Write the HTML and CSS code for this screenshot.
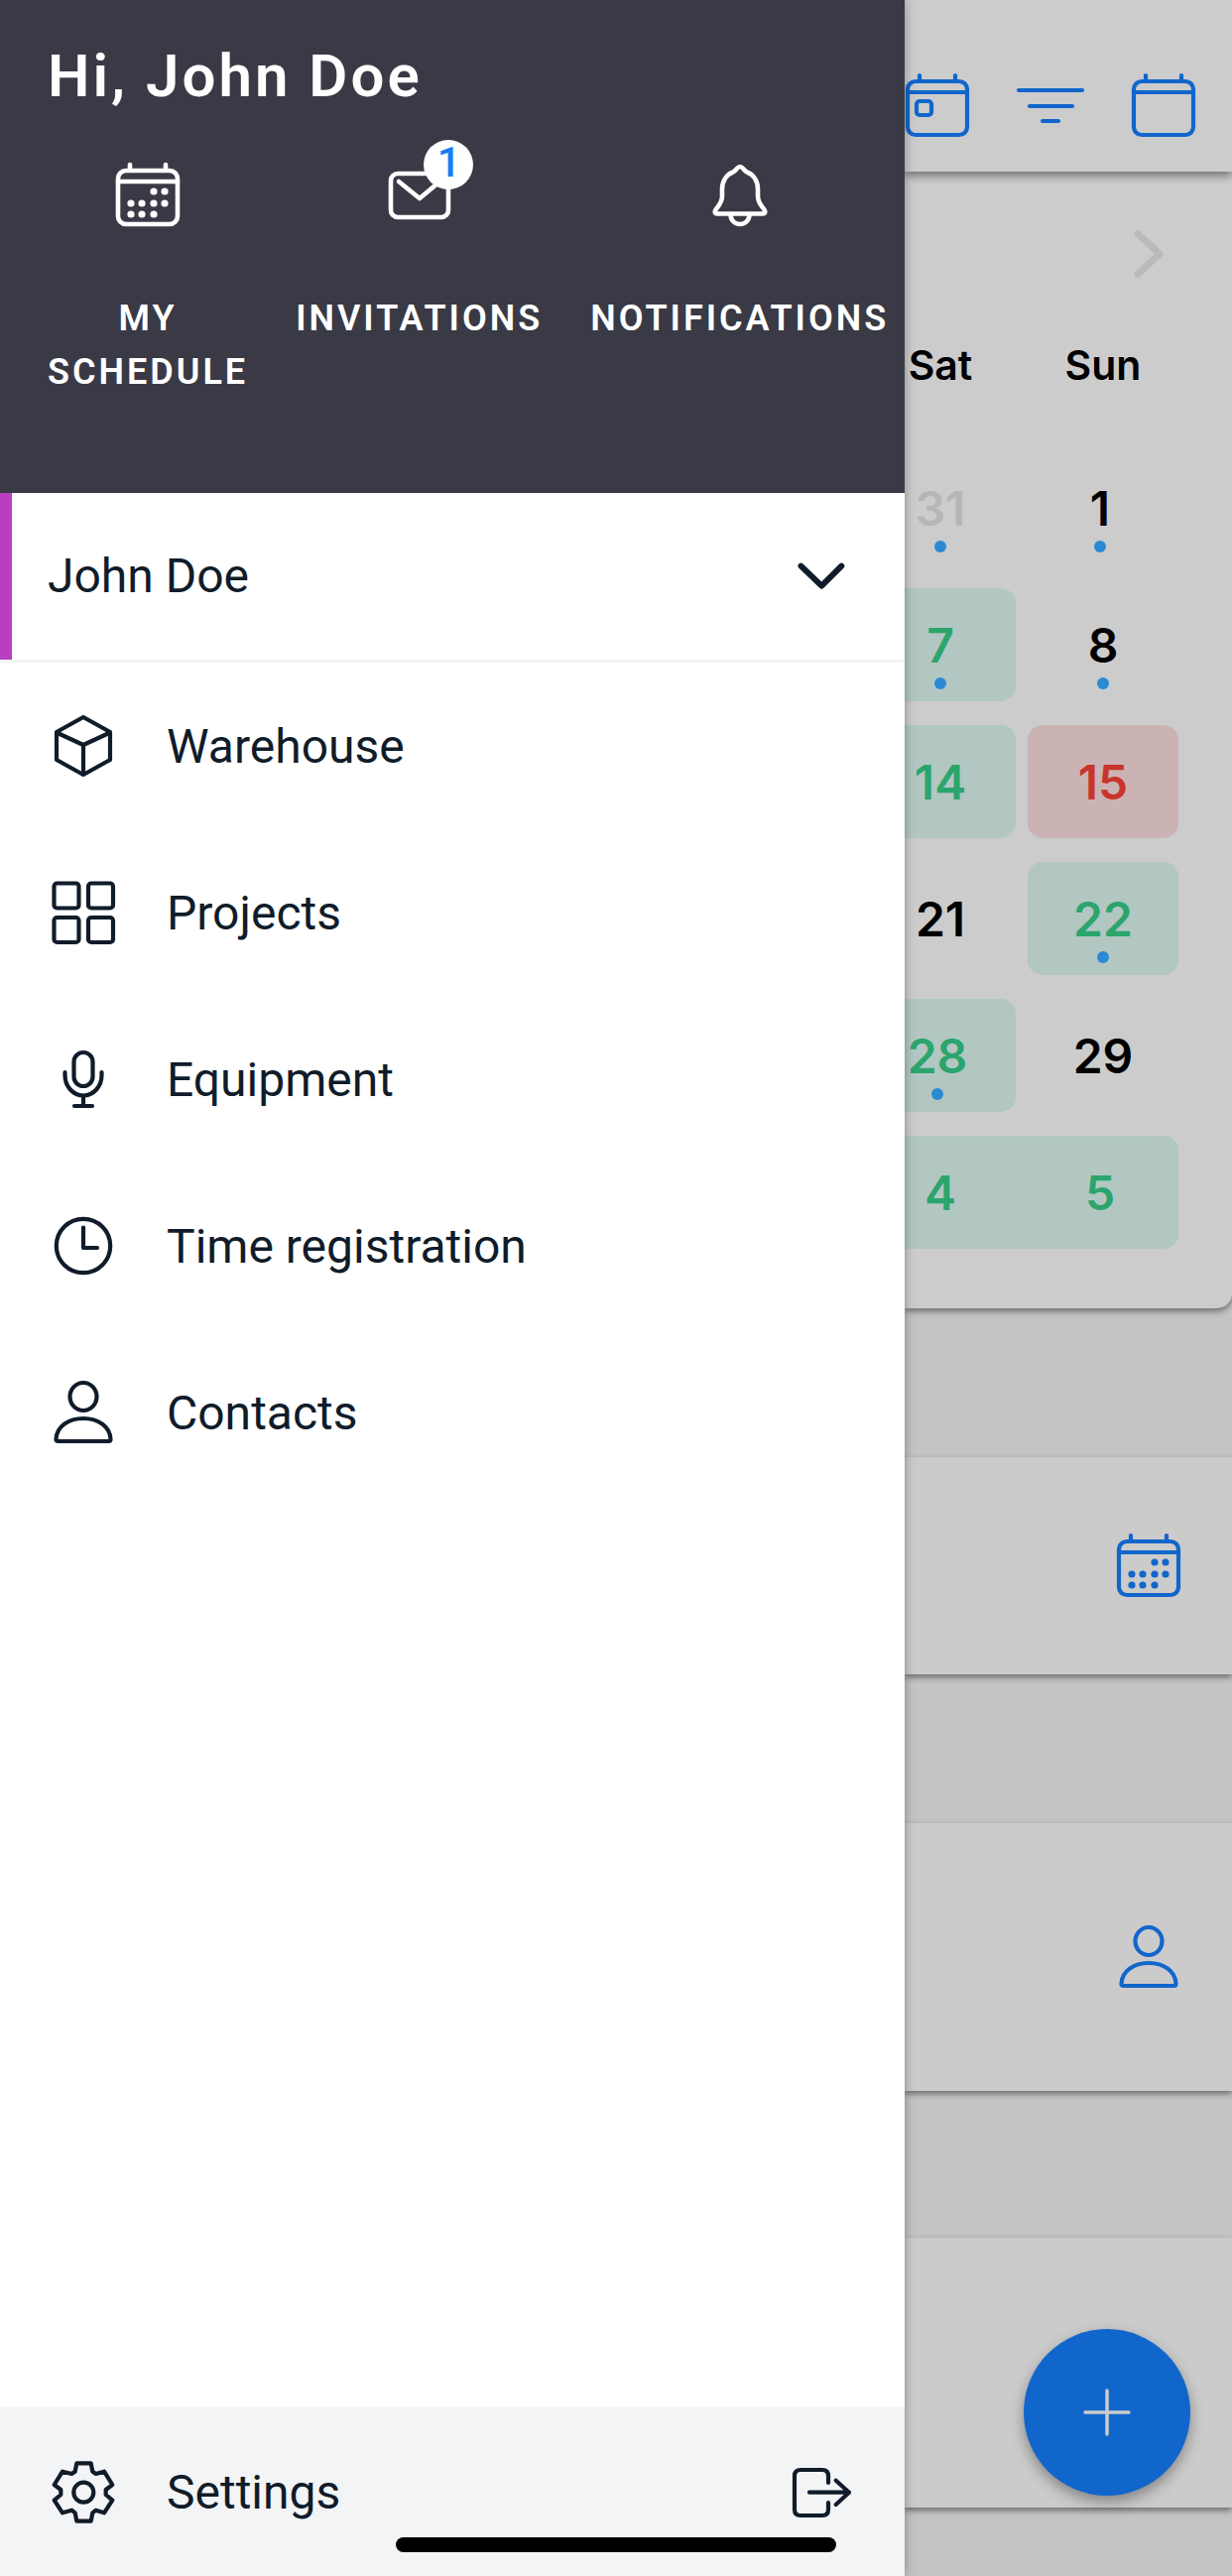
FILE: index.html
```html
<!DOCTYPE html>
<html lang="en">
<head>
<meta charset="utf-8">
<title>Drawer menu</title>
<link rel="stylesheet" href="styles.css">
</head>
<body>
<svg class="sprite" aria-hidden="true">
  <symbol id="cal-dots" viewBox="0 0 72 72">
    <rect x="6" y="10" width="60" height="54" rx="8"/>
    <path d="M6 21H66M18 4V9M54 4V9"/>
    <g class="fillc">
      <circle cx="42" cy="31" r="3.6"/><circle cx="53" cy="31" r="3.6"/>
      <circle cx="19" cy="43" r="3.6"/><circle cx="30" cy="43" r="3.6"/><circle cx="42" cy="43" r="3.6"/><circle cx="53" cy="43" r="3.6"/>
      <circle cx="19" cy="54" r="3.6"/><circle cx="30" cy="54" r="3.6"/><circle cx="42" cy="54" r="3.6"/>
    </g>
  </symbol>
  <symbol id="person" viewBox="0 0 72 72">
    <ellipse cx="36" cy="20" rx="13.5" ry="14"/>
    <path d="M8.5 63C9 50 21 42 36 42S63 50 63.5 63Q63.5 65 61.5 65H10.5Q8.5 65 8.5 63Z"/>
  </symbol>
</svg>
<div class="screen">
  <aside class="drawer">
    <header class="drawer-head">
      <h1 class="greeting">Hi, John Doe</h1>
      <nav class="quick">
        <a class="quick-item">
          <svg class="ic"><use href="#cal-dots"/></svg>
          <span class="quick-label">MY<br>SCHEDULE</span>
        </a>
        <a class="quick-item">
          <span class="icon-wrap">
            <svg class="ic" viewBox="0 0 72 72"><rect x="7" y="13" width="58" height="44" rx="7"/><path d="M15 21L36 38L60 18"/></svg>
            <span class="badge">1</span>
          </span>
          <span class="quick-label">INVITATIONS</span>
        </a>
        <a class="quick-item">
          <svg class="ic" viewBox="0 0 72 72"><path d="M36 6C33 6 32 10 29 11.5C22 14 18 21 18 29V36C18 42 14 46 11.5 49.5C10 52 11 53.5 13 53.5H59C61 53.5 62 52 60.5 49.5C58 46 54 42 54 36V29C54 21 50 14 43 11.5C40 10 39 6 36 6Z"/><path d="M26.5 54C26.5 60 30.5 64 36 64S45.5 60 45.5 54"/></svg>
          <span class="quick-label">NOTIFICATIONS</span>
        </a>
      </nav>
    </header>
    <div class="account">
      <span class="label">John Doe</span>
      <svg class="ic ic-chevron" viewBox="0 0 72 72"><path d="M15.5 25.7L36.3 45.7L56.3 25.7"/></svg>
    </div>
    <ul class="menu">
      <li class="menu-row">
        <svg class="ic" viewBox="0 0 72 72"><path d="M36 7L63 22V50L36 65L9 50V22Z"/><path d="M10 23L36 35L62 23M36 35V64" class="cube-inner"/></svg>
        <span class="label">Warehouse</span>
      </li>
      <li class="menu-row">
        <svg class="ic" viewBox="0 0 72 72"><rect x="6.5" y="6.5" width="25" height="25" rx="3"/><rect x="41" y="6.5" width="25" height="25" rx="3"/><rect x="6.5" y="41" width="25" height="25" rx="3"/><rect x="41" y="41" width="25" height="25" rx="3"/></svg>
        <span class="label">Projects</span>
      </li>
      <li class="menu-row">
        <svg class="ic" viewBox="0 0 72 72"><rect x="26.5" y="9" width="19" height="34" rx="9.5"/><path d="M17.5 29V32A18.5 20.5 0 0 0 54.5 32V29M36 53V63M27 63H45"/></svg>
        <span class="label">Equipment</span>
      </li>
      <li class="menu-row">
        <svg class="ic" viewBox="0 0 72 72"><circle cx="36" cy="36" r="27.2"/><path d="M36 17.5V38H50"/></svg>
        <span class="label">Time registration</span>
      </li>
      <li class="menu-row">
        <svg class="ic"><use href="#person"/></svg>
        <span class="label">Contacts</span>
      </li>
    </ul>
    <footer class="drawer-foot">
      <div class="foot-left">
        <svg class="ic" viewBox="0 0 72 72"><path d="M29.3 6.3H43.7L45.3 14.7L48.7 17L57 14.7L65.3 28L58.7 33V38L65.3 43.7L57 56.3L48.7 53.7L45.3 56.3L43.7 64.7H29.3L27.7 56.3L24.3 53.7L15 56.3L6.7 43.7L13.3 38V33L6.7 28L15 14.7L24.3 17L27.7 14.7Z"/><circle cx="36.3" cy="35.7" r="10"/></svg>
        <span class="label">Settings</span>
      </div>
      <svg class="ic" viewBox="0 0 72 72"><path d="M42 26V19Q42 13 36 13H14Q8 13 8 19V53Q8 59 14 59H36Q42 59 42 53V46M23 35.7H63M49.7 23.7L63 35.7L49.7 48"/></svg>
      <div class="home-bar"></div>
    </footer>
  </aside>

  <main class="behind">
    <div class="topbar">
      <svg class="ic" viewBox="0 0 72 72"><rect x="6" y="10" width="60" height="54" rx="8"/><path d="M6 21H66M18 4V9M54 4V9"/><rect x="15" y="30" width="15" height="14" rx="3"/></svg>
      <svg class="ic" viewBox="0 0 72 72"><path d="M4 19H68M15 35H58M28 50H44"/></svg>
      <svg class="ic" viewBox="0 0 72 72"><rect x="6" y="10" width="60" height="54" rx="8"/><path d="M6 21H66M18 4V9M54 4V9"/></svg>
    </div>
    <section class="calendar">
      <div class="cal-nav">
        <svg class="ic ic-next" viewBox="0 0 36 54"><path d="M7 6.5L29 27L7 47.5"/></svg>
      </div>
      <div class="weekdays">
        <span>Sat</span>
        <span>Sun</span>
      </div>
      <div class="days">
        <div class="day muted"><span>31</span><i class="dot"></i></div>
        <div class="day shift"><span>1</span><i class="dot"></i></div>
        <div class="day ok"><span>7</span><i class="dot"></i></div>
        <div class="day"><span>8</span><i class="dot"></i></div>
        <div class="day ok"><span>14</span></div>
        <div class="day bad"><span>15</span></div>
        <div class="day"><span>21</span></div>
        <div class="day ok"><span>22</span><i class="dot"></i></div>
        <div class="day ok shift"><span>28</span><i class="dot"></i></div>
        <div class="day"><span>29</span></div>
        <div class="day ok join-next"><span>4</span></div>
        <div class="day ok join-prev shift"><span>5</span></div>
      </div>
    </section>
    <section class="card card-a">
      <svg class="ic"><use href="#cal-dots"/></svg>
    </section>
    <section class="card card-b">
      <svg class="ic"><use href="#person"/></svg>
    </section>
    <section class="card card-c"></section>
    <button class="fab" aria-label="Add">
      <svg class="ic ic-plus" viewBox="0 0 48 48"><path d="M24 2V46M2 24H46"/></svg>
    </button>
  </main>
</div>
</body>
</html>
```
FILE: styles.css
```css
* { box-sizing: border-box; }
html, body { margin: 0; padding: 0; }
body {
  width: 1242px;
  height: 2597px;
  overflow: hidden;
  font-family: Roboto, "Liberation Sans", sans-serif;
  color: #101c2a;
  background: #c3c4c6;
}
.sprite { display: none; }
.screen { display: flex; width: 1242px; height: 2597px; }

.ic {
  width: 72px;
  height: 72px;
  flex: none;
  display: block;
  fill: none;
  stroke: currentColor;
  stroke-width: 4.2;
  stroke-linecap: round;
  stroke-linejoin: round;
}
.fillc { fill: currentColor; stroke: none; }

/* Drawer */
.drawer {
  position: relative;
  z-index: 2;
  width: 912px;
  flex: none;
  display: flex;
  flex-direction: column;
  background: #fff;
  box-shadow: 0 0 10px rgba(0, 0, 0, .35);
}
.drawer-head {
  height: 497px;
  flex: none;
  background: #3a3a46;
  color: #fff;
  padding: 41px 0 0 48px;
}
.drawer-head .ic { stroke-width: 4.6; }
.greeting {
  margin: 0;
  font-size: 60px;
  line-height: 72px;
  font-weight: 600;
  letter-spacing: 3px;
}
.quick { display: flex; gap: 48px; margin-top: 49px; }
.quick-item { display: flex; flex-direction: column; align-items: center; }
.icon-wrap { position: relative; display: block; width: 72px; height: 72px; }
.badge {
  position: absolute;
  left: 40px;
  top: -21px;
  width: 50px;
  height: 50px;
  border-radius: 50%;
  background: #fff;
  color: #1a7bf5;
  font-size: 42px;
  font-weight: 500;
  line-height: 46px;
  text-align: center;
  padding-left: 2px;
}
.quick-label {
  margin-top: 60px;
  font-size: 36px;
  line-height: 54px;
  font-weight: 600;
  letter-spacing: 3px;
  text-align: center;
}

.label { font-size: 48px; line-height: 60px; }

.account {
  height: 168px;
  flex: none;
  display: flex;
  align-items: center;
  justify-content: space-between;
  padding: 0 48px 0 36px;
  border-left: 12px solid #b83fc0;
}
.ic-chevron { stroke-width: 6; }

.menu {
  list-style: none;
  margin: 0;
  padding: 0;
  flex: 1;
  border-top: 3px solid #f3f4f6;
}
.menu-row {
  height: 168px;
  display: flex;
  align-items: center;
  gap: 48px;
  padding-left: 48px;
}
.menu-row .label { padding-top: 2px; }

.drawer-foot {
  position: relative;
  height: 170px;
  flex: none;
  display: flex;
  justify-content: space-between;
  align-items: flex-start;
  padding: 50px 47px 0 48px;
  background: #f3f4f6;
}
.foot-left { display: flex; align-items: center; gap: 48px; }
.home-bar {
  position: absolute;
  left: 399px;
  top: 131px;
  width: 444px;
  height: 15px;
  border-radius: 8px;
  background: #000;
}

/* Dimmed page behind the drawer */
.behind {
  position: relative;
  width: 330px;
  flex: none;
  overflow: hidden;
  background: #c3c4c6;
  font-family: Inter, "Liberation Sans", sans-serif;
  color: #000;
}
.topbar {
  position: relative;
  z-index: 1;
  height: 173px;
  display: flex;
  gap: 42px;
  justify-content: flex-end;
  padding: 72px 33px 0 0;
  background: #ccc;
  color: #1166cc;
  box-shadow: 0 4px 9px rgba(0, 0, 0, .45);
}
.calendar {
  background: #ccc;
  border-bottom-right-radius: 15px;
  padding-bottom: 60px;
  box-shadow: 0 3px 6px rgba(0, 0, 0, .45);
}
.cal-nav {
  height: 166px;
  display: flex;
  align-items: center;
  justify-content: flex-end;
  padding-right: 66px;
}
.ic-next { width: 36px; height: 54px; color: #bababa; stroke-width: 7; }
.weekdays, .days {
  display: grid;
  grid-template-columns: 152px 152px;
  column-gap: 12px;
  margin-left: -40px;
}
.weekdays {
  height: 58px;
  margin-bottom: 58px;
  font-size: 41px;
  line-height: 58px;
  font-weight: 600;
  text-align: center;
}
.days { row-gap: 24px; }
.day {
  position: relative;
  height: 114px;
  border-radius: 15px;
  display: flex;
  align-items: center;
  justify-content: center;
  font-size: 48px;
  font-weight: 600;
}
.day.shift { padding-right: 6px; }
.day.muted { color: #b6b6b6; }
.day.ok { background: #b2c7c2; color: #2ca56d; }
.day.bad { background: #ccb3b3; color: #c8352b; }
.day.join-next { border-radius: 15px 0 0 15px; margin-right: -12px; padding-right: 12px; }
.day.join-prev { border-radius: 0 15px 15px 0; }
.dot {
  position: absolute;
  top: 90px;
  left: 50%;
  width: 12px;
  height: 12px;
  margin-left: -6px;
  border-radius: 50%;
  background: #2a8ad4;
}
.day.shift .dot { margin-left: -9px; }

.card {
  display: flex;
  align-items: center;
  justify-content: flex-end;
  padding-right: 48px;
  background: #cbcbcb;
  color: #1166cc;
  box-shadow: 0 3px 6px rgba(0, 0, 0, .45);
}
.card-a { height: 219px; margin-top: 150px; padding-top: 3px; }
.card-b { height: 270px; margin-top: 150px; }
.card-c { height: 272px; margin-top: 148px; }

.fab {
  position: absolute;
  left: 120px;
  top: 2348px;
  width: 168px;
  height: 168px;
  padding: 0;
  border: 0;
  border-radius: 50%;
  background: #1166cc;
  color: #ccc;
  display: flex;
  align-items: center;
  justify-content: center;
  box-shadow: 0 6px 14px rgba(0, 0, 0, .35);
}
.ic-plus { width: 48px; height: 48px; stroke-width: 3.5; }
```
